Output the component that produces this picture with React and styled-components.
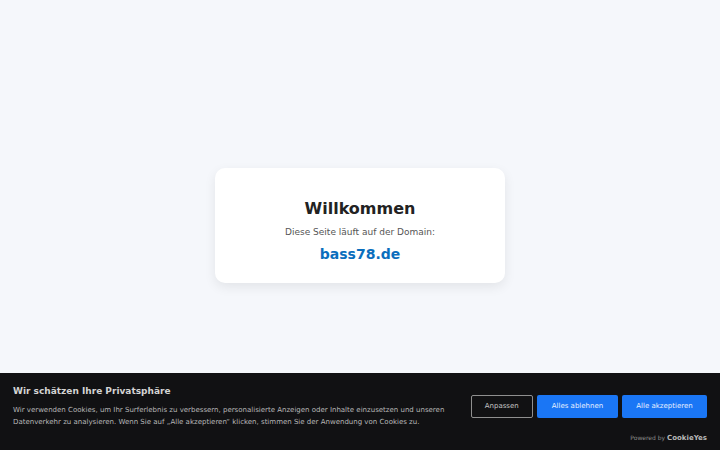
import React from "react";
import styled, { createGlobalStyle } from "styled-components";

const Global = createGlobalStyle`
  html, body { margin: 0; padding: 0; }
  body { font-family: "DejaVu Sans", sans-serif; background: #f5f7fb; overflow: hidden; }
`;
const Page = styled.main`
  height: 450px;
  display: flex;
  align-items: center;
  justify-content: center;
`;
const Card = styled.section`
  width: 290px;
  height: 115px;
  box-sizing: border-box;
  padding-top: 31px;
  background: #fff;
  border-radius: 10px;
  box-shadow: 0 4px 12px rgba(0, 0, 0, 0.08);
  text-align: center;
`;
const Title = styled.h1`
  margin: 0;
  font-size: 16px;
  line-height: 20px;
  font-weight: 700;
  color: #222;
`;
const Lead = styled.p`
  margin: 7px 0 0;
  font-size: 9px;
  line-height: 12px;
  color: #555;
`;
const Domain = styled.div`
  margin-top: 6px;
  font-size: 14px;
  line-height: 20px;
  font-weight: 700;
  color: #0a6ebd;
`;
const Banner = styled.aside`
  position: fixed;
  left: 0;
  right: 0;
  bottom: 0;
  height: 77px;
  box-sizing: border-box;
  padding: 12px 13px 0;
  background: #111113;
  display: flex;
  justify-content: space-between;
  gap: 24px;
`;
const Copy = styled.div`
  width: 440px;
`;
const BannerTitle = styled.div`
  font-size: 9px;
  line-height: 12px;
  font-weight: 700;
  color: #d4d4d4;
`;
const BannerText = styled.p`
  margin: 7px 0 0;
  font-size: 7px;
  line-height: 12px;
  color: #b8b8b8;
`;
const Side = styled.div`
  display: flex;
  flex-direction: column;
  align-items: flex-end;
  padding-top: 10px;
`;
const Buttons = styled.div`
  display: flex;
  gap: 4px;
`;
const Button = styled.button`
  height: 22.5px;
  width: ${(p) => p.$w}px;
  padding: 0;
  box-sizing: border-box;
  font-family: inherit;
  font-size: 7px;
  color: ${(p) => (p.$outline ? "#c4c4c4" : "#e8f0ff")};
  background: ${(p) => (p.$outline ? "transparent" : "#1a76f5")};
  border: ${(p) => (p.$outline ? "1.5px solid #8f8f8f" : "none")};
  border-radius: 2px;
`;
const Powered = styled.div`
  margin-top: 15.5px;
  display: flex;
  align-items: baseline;
  gap: 2px;
  font-size: 6px;
  line-height: 10px;
  color: #8a8a8a;
`;
const Brand = styled.span`
  font-size: 7px;
  font-weight: 700;
  color: #b8b8b8;
`;

export default function App() {
  return (
    <>
      <Global />
      <Page>
        <Card>
          <Title>Willkommen</Title>
          <Lead>Diese Seite läuft auf der Domain:</Lead>
          <Domain>bass78.de</Domain>
        </Card>
      </Page>
      <Banner>
        <Copy>
          <BannerTitle>Wir schätzen Ihre Privatsphäre</BannerTitle>
          <BannerText>
            Wir verwenden Cookies, um Ihr Surferlebnis zu verbessern, personalisierte Anzeigen oder Inhalte einzusetzen und unseren Datenverkehr zu analysieren. Wenn Sie auf „Alle akzeptieren“ klicken, stimmen Sie der Anwendung von Cookies zu.
          </BannerText>
        </Copy>
        <Side>
          <Buttons>
            <Button $outline $w={62.5}>Anpassen</Button>
            <Button $w={81}>Alles ablehnen</Button>
            <Button $w={85}>Alle akzeptieren</Button>
          </Buttons>
          <Powered>
            Powered by <Brand>CookieYes</Brand>
          </Powered>
        </Side>
      </Banner>
    </>
  );
}
